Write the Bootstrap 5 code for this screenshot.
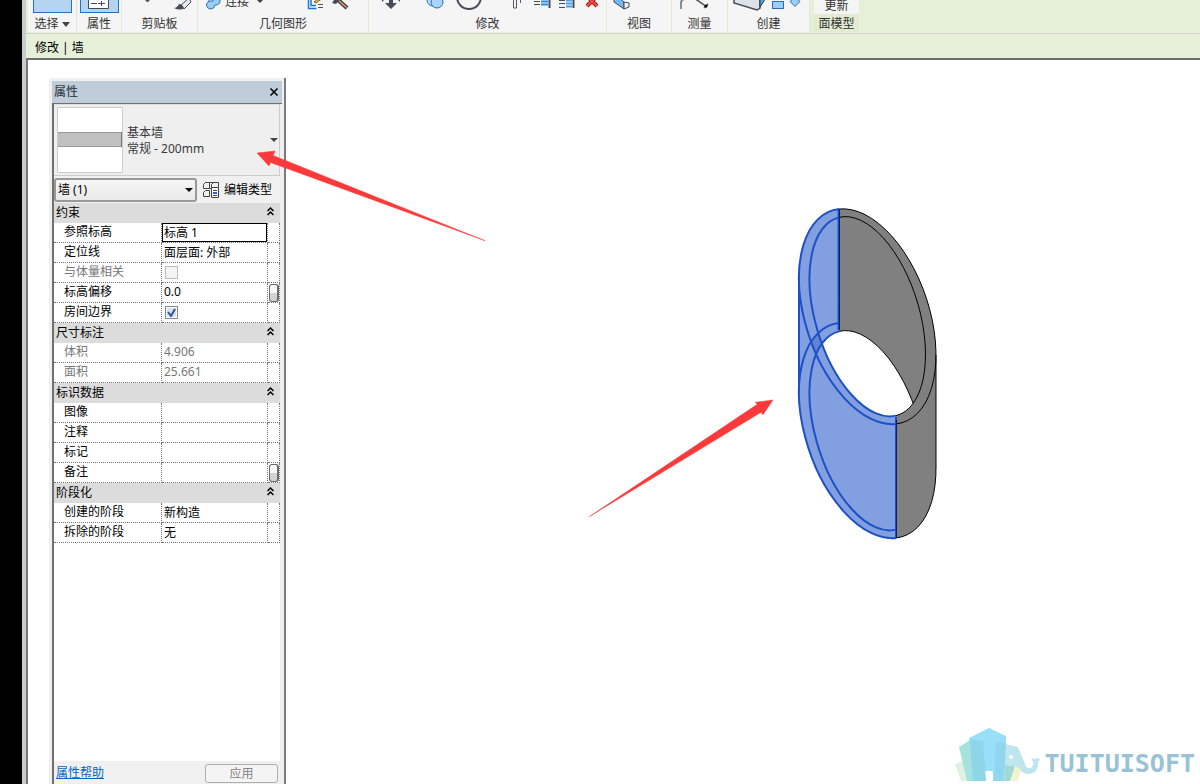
<!DOCTYPE html>
<html lang="zh-CN">
<head>
<meta charset="utf-8">
<meta name="viewport" content="width=device-width, initial-scale=1">
<title>修改 | 墙</title>
<link href="https://cdn.jsdelivr.net/npm/bootstrap@5.3.0/dist/css/bootstrap.min.css" rel="stylesheet">
<style>
  body { font-family: "Noto Sans", "Noto Sans CJK SC", sans-serif; font-size: 12px; line-height: 16px; color: #000; background: #fff; }
  button, input, select { font: inherit; color: inherit; }
  .edge-black { width: 22px; background: #000; }
  .edge-grey { width: 4px; background: #cbcbcb; }
  .ribbon { height: 34px; background: #e6efd8; border-bottom: 1px solid #cfd2ce; padding-left: 2px; color: #333; }
  .panel { background: #f5f5f5; border-right: 1px solid #e2ebcf; height: 32px; }
  .tools { height: 14px; overflow: hidden; }
  .tools svg { display: block; flex: none; }
  .panel-title { height: 18px; line-height: 19px; text-align: center; white-space: nowrap; }
  .w49 { width: 49px; } .w45 { width: 45px; } .w76 { width: 76px; } .w171 { width: 171px; } .w238 { width: 238px; }
  .w65 { width: 65px; } .w56 { width: 56px; } .w82 { width: 82px; }
  .big-tool { width: 39px; height: 13px; margin-bottom: 1px; background: #b4d4f2; border: 1px solid #2470be; border-top: 0; padding: 0; }
  .text-tool { border: 0; background: none; padding: 0; line-height: 16px; }
  .surface-panel { margin-left: 4px; background: #f5f5f5; height: 32px; }
  .surface-panel .panel-title { background: #e3ecd2; }
  .options { height: 26px; line-height: 27px; background: #e6efd8; border-bottom: 2px solid #6e6f70; padding-left: 9px; }
  .workspace { border-left: 2px solid #77787a; min-height: 0; }
  .palette { width: 237px; margin: 18px 0 0 21px; background: #f0f0f0; border-left: 3px solid #f0f0f0; border-right: 2px solid #7b7b7b; padding: 3px 2px 0 0; }
  .palette-head { height: 22px; background: #bfcddb; padding: 0 3px 0 2px; color: #3b454e; font-weight: 500; }
  .palette-head button { border: 0; background: none; padding: 0; height: 22px; }
  .palette-head svg, .group-btn svg { display: block; }
  .palette-body { border-left: 2px solid #707070; border-top: 1px solid #707070; padding-right: 2px; min-height: 0; }
  .type-picker { height: 72px; border: 0; border-right: 1px solid #ccc; border-bottom: 1px solid #ccc; border-top: 1px solid #ddd; background: #efefef; padding: 0 1px 0 3px; color: #3a3a3a; text-align: left; }
  .type-name { padding-top: 2px; }
  .thumb { display: block; flex: none; margin-right: 4px; }
  .filter-row { height: 27px; }
  .filter-row select { width: 143px; height: 24px; border: 2px solid #999; border-radius: 3px; background: linear-gradient(#f6f6f6, #e9e9e9); appearance: none; padding: 0 2px; display: block; }
  .select-arrow { right: 4px; top: 10px; pointer-events: none; }
  .edit-type { border: 0; background: none; padding: 0; margin-left: 6px; gap: 4px; height: 22px; white-space: nowrap; }
  .props { width: 100%; table-layout: fixed; border-collapse: separate; border-spacing: 0; background: #fff; }
  .props td, .props th { height: 20px; padding: 0; font-weight: 400; line-height: 18px; white-space: nowrap; vertical-align: top; }
  .props tbody th, .props td { border-bottom: 1px dotted #777; border-right: 1px dotted #777; }
  .props tbody th[scope="row"] { padding-left: 10px; }
  .props tbody th.group { background: #dcdcdc; border: 0; padding-left: 2px; line-height: 19px; }
  .group-btn { border: 0; background: none; padding: 0 6px 0 0; height: 17px; }
  .props input[type=text] { display: block; width: 100%; height: 19px; border: 0; padding: 0 2px 2px; background: none; outline: 0; border-radius: 0; }
  .props input[type=text].active-cell { border: 1px solid #000; padding: 0 1px 2px; }
  .props .off { color: #777; }
  .props input[type=checkbox] { appearance: none; display: block; width: 13px; height: 13px; margin: 3px 0 0 3px; border: 1px solid #999; background: #f4f4f4; border-radius: 0; }
  .props input[type=checkbox]:disabled { border-color: #bbb; }
  .props input[type=checkbox]:checked { border-color: #858a90; box-shadow: inset 0 0 0 1px #fff; background: #dde3ea; }
  .tick { left: 5px; top: 5px; pointer-events: none; }
  .props .more { display: block; width: 10px; height: 18px; margin: 1px 0 0 1px; padding: 0; border: 1px solid #6c6c6c; border-right-width: 2px; border-radius: 3px; background: linear-gradient(#f8f8f8 50%, #d2d2d2 50%); }
  .blank { background: #fff; min-height: 0; }
  .palette-foot { height: 23px; padding: 1px 2px 0 2px; }
  .palette-foot a { color: #0066cc; }
  .palette-foot button { width: 73px; height: 19px; border: 1px solid #adadad; border-radius: 3px; background: #f4f4f4; color: #838383; padding: 0; line-height: 17px; }
  .model { left: 790px; top: 200px; }
  .note-a { left: 250px; top: 145px; }
  .note-b { left: 580px; top: 390px; }
  .watermark { right: 5px; bottom: 2px; color: #9ac2d6; font: bold 25px/30px "DejaVu Sans Mono", monospace; gap: 4px; }
  .watermark .word { margin-bottom: 3px; }
</style>
</head>
<body>
<div class="d-flex vh-100 overflow-hidden position-relative">
  <div class="edge-black flex-shrink-0"></div>
  <div class="edge-grey flex-shrink-0"></div>
  <div class="d-flex flex-column flex-grow-1 overflow-hidden">

    <header class="ribbon d-flex flex-shrink-0">
      <section class="panel w49">
        <div class="tools d-flex align-items-end justify-content-center"><button class="big-tool" aria-label="选择"></button></div>
        <div class="panel-title">选择 <svg width="8" height="5"><path d="M0 0h8L4 5z" fill="#444"/></svg></div>
      </section>
      <section class="panel w45">
        <div class="tools d-flex align-items-end justify-content-center">
          <button class="big-tool" aria-label="属性"><svg width="37" height="12"><path d="M7.500-2V8.500h20V-2" fill="#fff" stroke="#454b57"/><path d="M10 3.500h6M17 3.500h7M20.500 1v5" stroke="#454b57"/></svg></button>
        </div>
        <div class="panel-title">属性</div>
      </section>
      <section class="panel w76">
        <svg class="tools d-block" width="75" height="14"><path d="M23 0h5l-2.500 2.500z" fill="#555"/><path d="M67-2l-9 8 4 3 7-7z" fill="#e6e9ed" stroke="#454b57"/><path d="M57 4q3 0 5 4-4 3-10 0 3 0 5-4z" fill="#454b57"/></svg>
        <div class="panel-title">剪贴板</div>
      </section>
      <section class="panel w171">
        <div class="tools d-flex align-items-end">
          <svg width="27" height="14"><path d="M11-2v4M22-2v3q0 4-5 4-1 4-4 4a4.500 4 0 1 1 0-8h2v-3z" fill="#9bcdf5" stroke="#2470be"/></svg>
          <button class="text-tool pb-1">连接</button>
          <svg width="118" height="14"><path d="M8 0h6l-3 3z" fill="#444"/><path d="M59.500-2V8.500h8M62-2V5.500h5" fill="none" stroke="#1678d4" stroke-width="1.500"/><path d="M69 4.500h5M69 7.500h5" stroke="#555"/><path d="M65 2l7-6 2 2-7 5z" fill="#f5bd32" stroke="#333" stroke-width=".7"/><path d="M87-2l11 10" stroke="#41302c" stroke-width="4"/><path d="M88-1l9.500 8.500" stroke="#d9a489" stroke-width="1.500"/><path d="M83 3l4-6 4 3-4 4z" fill="#454b57"/></svg>
        </div>
        <div class="panel-title">几何图形</div>
      </section>
      <section class="panel w238">
        <svg class="tools d-block" width="237" height="14"><path d="M20-2h4v5h4l-6 6-6-6h4zM16-1l-3 3v-4zM28-1l3 3v-4z" fill="#454b57"/><circle cx="64" cy="0" r="6" fill="#bfe1fb" stroke="#2470be"/><circle cx="68" cy="2" r="6" fill="#a9d5f8" stroke="#2470be"/><circle cx="100" cy="-3" r="12" fill="none" stroke="#454b57" stroke-width="2"/><path d="M144.500-2V8h3V-2M151.500-2V3" fill="none" stroke="#555b66"/><path d="M165 1.500h6M165 4.500h6" stroke="#454b57"/><path d="M172 1.500h7M172 4.500h7" stroke="#2b8de3" stroke-width="2"/><path d="M180.500-1V8" stroke="#454b57" stroke-width="2"/><path d="M190 .500h6M190 3.500h6M190 7.500h6" stroke="#454b57"/><path d="M197 .500h6M197 3.500h6M197 6.500h6" stroke="#45a2f1" stroke-width="2"/><path d="M204.500-1V8" stroke="#454b57" stroke-width="2"/><path d="M218 6l5-5 5 5M218-4l5 5 5-5" fill="none" stroke="#a71919" stroke-width="4"/><path d="M218 6l5-5 5 5M218-4l5 5 5-5" fill="none" stroke="#f24b45" stroke-width="2"/></svg>
        <div class="panel-title">修改</div>
      </section>
      <section class="panel w65">
        <svg class="tools d-block" width="64" height="14"><path d="M7-1v3l10 7V2l-5-4z" fill="#74b8f4" stroke="#454b57"/><path d="M17 2l5 1v4l-5 2z" fill="#eef1f4" stroke="#454b57"/></svg>
        <div class="panel-title">视图</div>
      </section>
      <section class="panel w56">
        <svg class="tools d-block" width="55" height="14"><path d="M9 9V3q0-3 3-4" fill="none" stroke="#888d96" stroke-width="2"/><path d="M22-2l13 9M32 8l4-4" stroke="#454b57" stroke-width="1.500"/><circle cx="34" cy="6" r="1.500"/></svg>
        <div class="panel-title">测量</div>
      </section>
      <section class="panel w82">
        <svg class="tools d-block" width="81" height="14"><path d="M6-1v4l23 7 3-2v-9H6z" fill="#dde2e8" stroke="#454b57" stroke-width="1.500"/><path d="M32-2v9l4-6v-3" fill="#4ba9f5" stroke="#333"/><rect x="44.500" y="1.500" width="11" height="7" fill="#9bcdf5" stroke="#2470be"/><path d="M67-3l5 4.500-5 5-5-5z" fill="#9bcdf5" stroke="#3d6f9c"/></svg>
        <div class="panel-title">创建</div>
      </section>
      <section class="surface-panel w45">
        <div class="tools d-flex align-items-end justify-content-center"><button class="text-tool">更新</button></div>
        <div class="panel-title">面模型</div>
      </section>
    </header>

    <div class="options flex-shrink-0">修改 | 墙</div>

    <main class="workspace d-flex flex-grow-1">
      <aside class="palette d-flex flex-column flex-shrink-0">
        <div class="palette-head d-flex justify-content-between align-items-center">
          <span>属性</span>
          <button aria-label="关闭"><svg width="10" height="8"><path d="M1.500 .500l7 7M8.500 .500l-7 7" stroke="#000" stroke-width="1.500"/></svg></button>
        </div>
        <div class="palette-body d-flex flex-column flex-grow-1">
          <button class="type-picker d-flex align-items-center flex-shrink-0">
            <svg class="thumb" width="66" height="66"><path d="M.500 .500h65v65H.500z" fill="#fff" stroke="#ccc"/><path d="M1 25h64v15H1z" fill="#c0c0c0"/><path d="M1 25.500h63.500v14H1" fill="none" stroke="#999"/><path d="M64.500 25v15" stroke="#777"/></svg>
            <span class="type-name flex-grow-1">基本墙<br>常规 - 200mm</span>
            <svg width="8" height="4"><path d="M0 0h8L4 4z" fill="#444"/></svg>
          </button>
          <div class="filter-row d-flex flex-shrink-0 align-items-center">
            <div class="position-relative">
              <select aria-label="图元过滤"><option>墙 (1)</option></select>
              <svg class="select-arrow position-absolute" width="8" height="4"><path d="M0 0h8L4 4z"/></svg>
            </div>
            <button class="edit-type d-flex align-items-center"><svg width="17" height="16" fill="none" stroke="#444"><path d="M2.500 .500h4v6h-6v-4zM10.500 .500h5v5M8.500 6.500v-4l2-2M2.500 8.500h4v6h-6v-4zM6.500 .500h4M8.500 6.500h-2"/><path d="M8.500 5.500h7v10h-7z" fill="#fff"/><path d="M10 8.500h4M10 13.500h4"/><path d="M10 11h4" stroke="#2a65cc" stroke-width="2"/></svg>编辑类型</button>
          </div>
          <table class="props flex-shrink-0">
            <colgroup><col style="width:108px"><col><col style="width:12px"></colgroup>
            <tbody>
              <tr><th class="group" colspan="3"><div class="d-flex justify-content-between">约束<button class="group-btn" aria-label="折叠约束"><svg width="7" height="9" fill="none" stroke="#000" stroke-width="1.500"><path d="M.500 4l3-3 3 3M.500 8l3-3 3 3"/></svg></button></div></th></tr>
              <tr><th scope="row"><label for="p1">参照标高</label></th><td><input type="text" id="p1" class="active-cell" value="标高 1"></td><td></td></tr>
              <tr><th scope="row"><label for="p2">定位线</label></th><td><input type="text" id="p2" value="面层面: 外部"></td><td></td></tr>
              <tr><th scope="row" class="off"><label for="p3">与体量相关</label></th><td><input type="checkbox" id="p3" disabled></td><td></td></tr>
              <tr><th scope="row"><label for="p4">标高偏移</label></th><td><input type="text" id="p4" value="0.0"></td><td><button class="more" aria-label="关联参数"></button></td></tr>
              <tr><th scope="row"><label for="p5">房间边界</label></th><td class="position-relative"><input type="checkbox" id="p5" checked><svg class="tick position-absolute" width="9" height="9"><path d="M1 4l3 4 4-7" fill="none" stroke="#3450a0" stroke-width="2"/></svg></td><td></td></tr>
              <tr><th class="group" colspan="3"><div class="d-flex justify-content-between">尺寸标注<button class="group-btn" aria-label="折叠尺寸标注"><svg width="7" height="9" fill="none" stroke="#000" stroke-width="1.500"><path d="M.500 4l3-3 3 3M.500 8l3-3 3 3"/></svg></button></div></th></tr>
              <tr class="off"><th scope="row"><label for="p6">体积</label></th><td><input type="text" id="p6" value="4.906" readonly></td><td></td></tr>
              <tr class="off"><th scope="row"><label for="p7">面积</label></th><td><input type="text" id="p7" value="25.661" readonly></td><td></td></tr>
              <tr><th class="group" colspan="3"><div class="d-flex justify-content-between">标识数据<button class="group-btn" aria-label="折叠标识数据"><svg width="7" height="9" fill="none" stroke="#000" stroke-width="1.500"><path d="M.500 4l3-3 3 3M.500 8l3-3 3 3"/></svg></button></div></th></tr>
              <tr><th scope="row"><label for="p8">图像</label></th><td><input type="text" id="p8"></td><td></td></tr>
              <tr><th scope="row"><label for="p9">注释</label></th><td><input type="text" id="p9"></td><td></td></tr>
              <tr><th scope="row"><label for="p10">标记</label></th><td><input type="text" id="p10"></td><td></td></tr>
              <tr><th scope="row"><label for="p11">备注</label></th><td><input type="text" id="p11"></td><td><button class="more" aria-label="关联参数"></button></td></tr>
              <tr><th class="group" colspan="3"><div class="d-flex justify-content-between">阶段化<button class="group-btn" aria-label="折叠阶段化"><svg width="7" height="9" fill="none" stroke="#000" stroke-width="1.500"><path d="M.500 4l3-3 3 3M.500 8l3-3 3 3"/></svg></button></div></th></tr>
              <tr><th scope="row"><label for="p12">创建的阶段</label></th><td><input type="text" id="p12" value="新构造"></td><td></td></tr>
              <tr><th scope="row"><label for="p13">拆除的阶段</label></th><td><input type="text" id="p13" value="无"></td><td></td></tr>
            </tbody>
          </table>
          <div class="blank flex-grow-1"></div>
          <div class="palette-foot d-flex justify-content-between align-items-center flex-shrink-0">
            <a href="#">属性帮助</a>
            <button disabled>应用</button>
          </div>
        </div>
      </aside>
    </main>
  </div>

  <!-- Wall model: a slanted oval tube, left half selected. Half arcs use a small radius so that they grow to exact semicircles. -->
  <svg class="model position-absolute" width="160" height="350" viewBox="790 200 160 350" role="img" aria-label="墙模型">
    <defs>
      <path id="outerL" d="M-.416-.909A.9 .9 0 0 0 .416 .909" transform="matrix(68.500 38.500 0 100.600 867.500 316.500)" vector-effect="non-scaling-stroke"/>
      <path id="outerR" d="M-.416-.909A.9 .9 0 0 1 .416 .909" transform="matrix(68.500 38.500 0 100.600 867.500 316.500)" vector-effect="non-scaling-stroke"/>
      <path id="innerL" d="M-.491-.871A.9 .9 0 0 0 .491 .871" transform="matrix(58 38 0 92.400 867.500 316.500)" vector-effect="non-scaling-stroke"/>
      <path id="innerR" d="M-.491-.871A.9 .9 0 0 1 .491 .871" transform="matrix(58 38 0 92.400 867.500 316.500)" vector-effect="non-scaling-stroke"/>
      <circle id="outer" r="1" transform="matrix(68.500 38.500 0 100.600 867.500 316.500)"/>
      <circle id="inner" r="1" transform="matrix(58 38 0 92.400 867.500 316.500)"/>
      <g id="solid"><use href="#outer"/><use href="#outer" y="114"/><path d="M799 278v114L936 469V355z"/></g>
      <clipPath id="inTop"><circle r="1" transform="matrix(58 38 0 92.400 867.500 316.500)"/></clipPath>
      <clipPath id="selected"><path d="M790 200h48.500v135l57.500 82v130H790z"/></clipPath>
      <clipPath id="lowRight"><path d="M896 469h50v80h-50z"/></clipPath>
      <mask id="topBand"><use href="#outer" fill="#fff"/><use href="#inner" fill="#000"/></mask>
      <mask id="lowBand"><use href="#outer" y="114" fill="#fff"/><use href="#inner" y="114" fill="#000"/></mask>
    </defs>
    <use href="#solid" fill="#808080"/>
    <g clip-path="url(#selected)"><use href="#solid" fill="#829fdf"/>
      <g mask="url(#topBand)"><g mask="url(#lowBand)"><path d="M799 290h40v90h-40z" fill="#5f83d5"/></g></g></g>
    <g clip-path="url(#inTop)"><use href="#inner" y="114" fill="#fff"/><use href="#innerR" y="114" fill="none" stroke="#000"/></g>
    <g fill="none" stroke="#000">
      <use href="#outerR"/><use href="#innerR"/>
      <g clip-path="url(#lowRight)"><use href="#outerR" y="114"/></g>
      <path d="M936 355v114"/>
    </g>
    <g fill="none" stroke="#1d50c8" stroke-width="2">
      <use href="#innerL" y="114"/><use href="#outerL" y="114"/><use href="#innerL"/><use href="#outerL"/>
      <path d="M799 277v116M838.500 209v121M896 417v121"/>
    </g>
    <path d="M839.500 209v121M896.500 420v118" stroke="#061f70"/>
  </svg>

  <svg class="note-a position-absolute" width="240" height="100" viewBox="250 145 240 100" aria-hidden="true"><path d="M257 153l18-2-2 4.500L485 240.700 270.500 162.500 269 166z" fill="#fa3a3a" stroke="#fa3a3a" stroke-width=".5"/></svg>
  <svg class="note-b position-absolute" width="200" height="130" viewBox="580 390 200 130" aria-hidden="true"><path d="M773 400l-17.700 2.300 2 2L589.500 516.500 761 412.300l2 2.400z" fill="#fa3a3a" stroke="#fa3a3a" stroke-width=".5"/></svg>

  <div class="watermark d-flex align-items-end position-absolute">
    <svg width="85" height="54" viewBox="955 728 85 54"><path d="M955 764l12-5 5 22h-11z" fill="#dff1e4"/><path d="M959 747l11-7 10 2 4 39h-17z" fill="#a5e1dd"/><path d="M969 738l20-10 17 8v45h-13v-9q0-1-2-1h-4q-2 0-2 1v9h-11z" fill="#98dff9"/><path d="M970 740l13 1 3 40h-13z" fill="#8dd5e8"/><path d="M996 742l22 5 8 19q3 4 6 1 2-3 1-6l-2-1q2-3 4-1 3-2 5 0-1 2-2 3 1 11-9 12-7 0-12-7l-9-2-3 16h-10z" fill="#bfe6ef"/><path d="M996 742l10 1-2 38h-10z" fill="#90d6ee"/><path d="M1005 765l10 1-3 15h-7z" fill="#a4d9d3"/><path d="M1015 766l6 4-3 11h-8z" fill="#eff5cd"/><circle cx="1011" cy="757" r="2" fill="#fff"/></svg>
    <span class="word">TUITUISOFT</span>
  </div>
</div>
<script src="https://cdn.jsdelivr.net/npm/bootstrap@5.3.0/dist/js/bootstrap.bundle.min.js"></script>
</body>
</html>
